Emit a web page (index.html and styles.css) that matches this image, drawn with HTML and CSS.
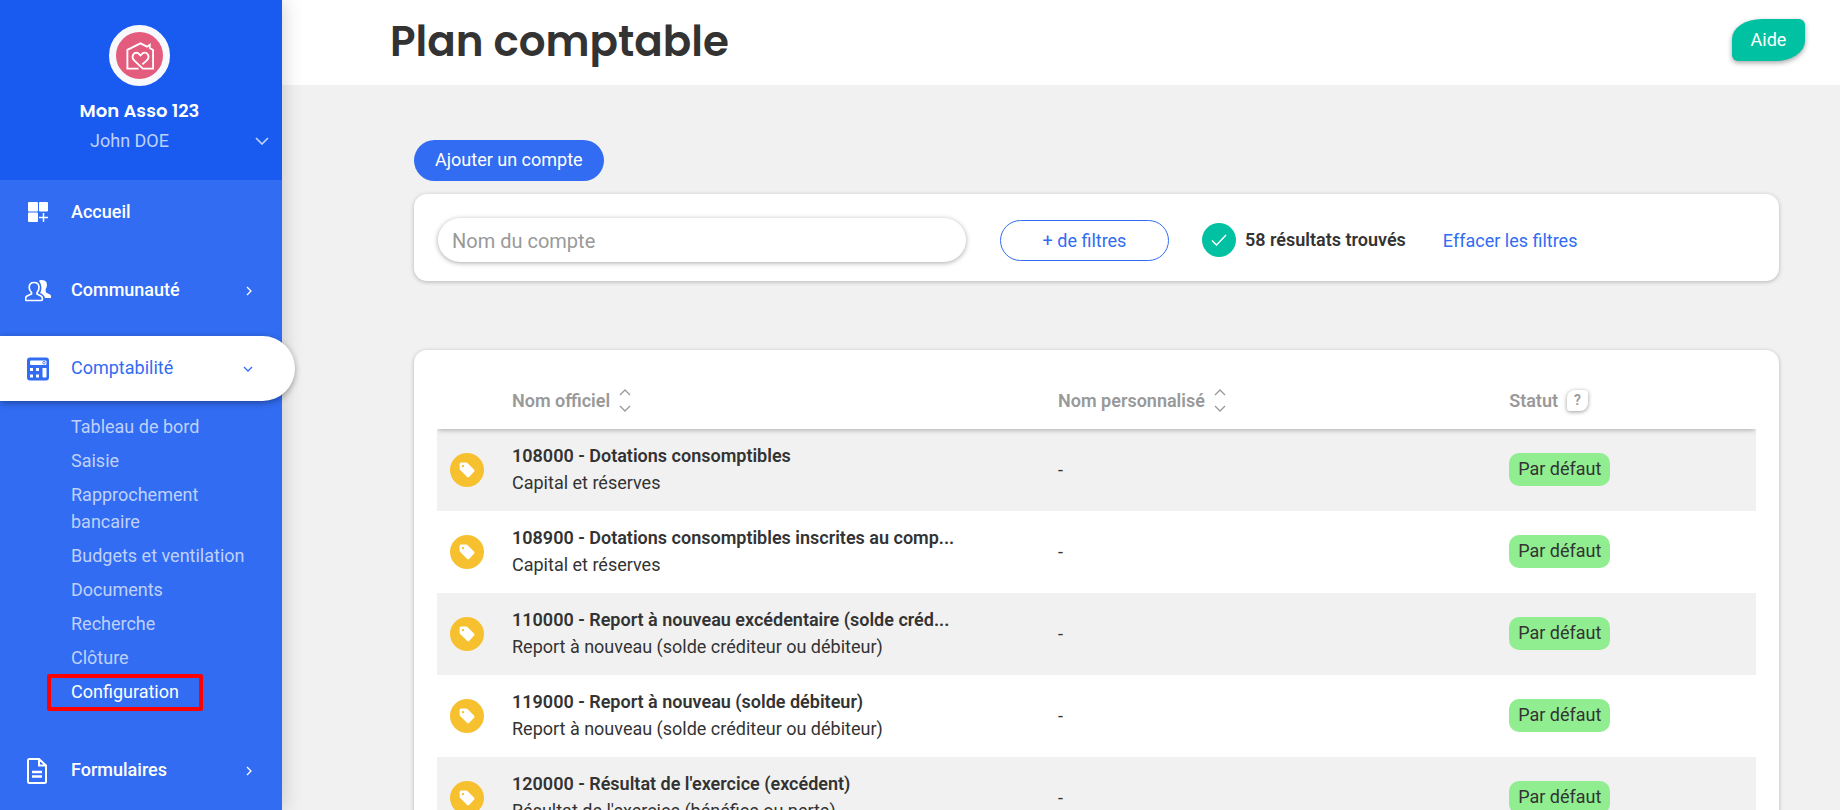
FILE: index.html
```html
<!DOCTYPE html>
<html lang="fr">
<head>
<meta charset="utf-8">
<title>Plan comptable</title>
<meta name="viewport" content="width=device-width, initial-scale=1">
<link rel="stylesheet" href="styles.css">
</head>
<body>
<svg class="sprite" aria-hidden="true">
  <symbol id="tag" viewBox="0 0 16 16">
    <path fill-rule="evenodd" d="M2 .5H7Q8 .5 8.700 1.200L15 7.500Q16 8.600 15 9.700L10.300 14.700Q9.200 15.800 8 14.700L1.400 8.300Q.6 7.500 .6 6.500V2Q.6 .5 2 .5ZM4 2.900A1.200 1.200 0 1 0 4 5.300A1.200 1.200 0 1 0 4 2.900Z"/>
  </symbol>
  <symbol id="sort" viewBox="0 0 12 24">
    <path d="M1 7L6 2L11 7M1 18L6 23L11 18"/>
  </symbol>
  <symbol id="next" viewBox="0 0 6 10"><path d="M1 1L5 5L1 9"/></symbol>
</svg>
<div class="app">
  <aside class="sidebar">
    <div class="account">
      <div class="logo">
        <svg viewBox="0 0 30 30" aria-hidden="true">
          <path d="M13.500 28.500H1.500V8.500L15.500 1.500L22.500 5L25.500 3V6.500L29 8.500V28.500H18L9 20C4.500 15 9 10 13 12L15.500 14.500L18 12C22 10 27 15 22 20L17.500 24"/>
        </svg>
      </div>
      <strong class="asso">Mon Asso 123</strong>
      <button class="user" type="button"><span>John DOE</span>
        <svg viewBox="0 0 14 8" aria-hidden="true"><path d="M1 1L7 7L13 1"/></svg>
      </button>
    </div>
    <nav class="menu">
      <a class="item" href="#">
        <svg class="icon" viewBox="0 0 26 26" aria-hidden="true">
          <g fill="currentColor"><rect x="3" y="2" width="10" height="9.500" rx="1"/><rect x="14" y="2" width="9" height="9.500" rx="1"/><rect x="3" y="12.500" width="10" height="9.500" rx="1"/></g>
          <path d="M18.500 13V22M14 17.500H23" stroke="currentColor" stroke-width="1.500"/>
        </svg>
        <span>Accueil</span>
      </a>
      <a class="item" href="#">
        <svg class="icon" viewBox="0 0 26 26" aria-hidden="true">
          <path d="M9 4.500C12.500 4.500 14 6.500 14 9.500C14 11.500 13.500 13 12 14.500V16L16 18Q17.500 19 17.500 21Q17.500 22.500 16 22.500H2Q.5 22.500 .5 21Q.5 19 2 18L6.500 16V14.500C5 13 4.200 11.500 4.200 9.500C4.200 6.500 5.500 4.500 9 4.500Z" fill="none" stroke="currentColor" stroke-width="1.700"/>
          <path d="M14 3C15 1.700 20 1.500 21.500 4.500C22.500 7.500 21.500 10 20.500 11.500L21 14.500L25 16.500Q26.500 17.500 26 20H20C19.500 17.500 17.500 16 15 15C17 11.500 17 6.500 14 3Z" fill="currentColor"/>
        </svg>
        <span>Communauté</span>
        <svg class="chevron" aria-hidden="true"><use href="#next"/></svg>
      </a>
      <a class="item active" href="#">
        <svg class="icon" viewBox="0 0 26 26" aria-hidden="true">
          <path fill="currentColor" fill-rule="evenodd" d="M5 1.500H21Q24 1.500 24 4.500V21.500Q24 24.500 21 24.500H5Q2 24.500 2 21.500V4.500Q2 1.500 5 1.500ZM6 4.500Q5 4.500 5 5.500V8Q5 9 6 9H20.500Q21.500 9 21.500 8V5.500Q21.500 4.500 20.500 4.500ZM5 12V15H8V12ZM11 12V15H14V12ZM5 18.500V21.500H8V18.500ZM11 18.500V21.500H14V18.500ZM17.500 12V20.500Q17.500 21.500 18.500 21.500H20.500Q21.500 21.500 21.500 20.500V12Z"/>
          <circle cx="19" cy="6.700" r="1.300" fill="none" stroke="currentColor" stroke-width=".8"/>
        </svg>
        <span>Comptabilité</span>
        <svg class="chevron down" viewBox="0 0 10 6" aria-hidden="true"><path d="M1 1L5 5L9 1"/></svg>
      </a>
      <div class="submenu">
        <a href="#">Tableau de bord</a>
        <a href="#">Saisie</a>
        <a href="#">Rapprochement bancaire</a>
        <a href="#">Budgets et ventilation</a>
        <a href="#">Documents</a>
        <a href="#">Recherche</a>
        <a href="#">Clôture</a>
        <a class="current" href="#">Configuration</a>
      </div>
      <a class="item" href="#">
        <svg class="icon" viewBox="0 0 26 26" aria-hidden="true">
          <path d="M4.500 1H14L21 7.500V23.500Q21 25 19.500 25H4.500Q3 25 3 23.500V2.500Q3 1 4.500 1ZM14 1V7.500H21" fill="none" stroke="currentColor" stroke-width="2"/>
          <path d="M7 14H17M7 18.500H17" stroke="currentColor" stroke-width="2.400"/>
        </svg>
        <span>Formulaires</span>
        <svg class="chevron" aria-hidden="true"><use href="#next"/></svg>
      </a>
    </nav>
  </aside>
  <div class="page">
    <header class="topbar">
      <h1>Plan comptable</h1>
      <button class="help" type="button">Aide</button>
    </header>
    <main class="content">
      <button class="add" type="button">Ajouter un compte</button>
      <form class="card filters">
        <input class="search" type="text" placeholder="Nom du compte" aria-label="Nom du compte">
        <button class="more" type="button">+ de filtres</button>
        <div class="result">
          <span class="check"><svg viewBox="0 0 16 12" aria-hidden="true"><path d="M1 6.500L5.500 11L15 1"/></svg></span>
          <strong>58 résultats trouvés</strong>
        </div>
        <a class="clear" href="#">Effacer les filtres</a>
      </form>
      <section class="card list">
        <table>
          <thead>
            <tr>
              <th class="c-icon"></th>
              <th class="c-name"><span class="head">Nom officiel <svg class="sort" aria-hidden="true"><use href="#sort"/></svg></span></th>
              <th class="c-custom"><span class="head">Nom personnalisé <svg class="sort" aria-hidden="true"><use href="#sort"/></svg></span></th>
              <th><span class="head">Statut <button class="hint" type="button">?</button></span></th>
            </tr>
          </thead>
          <tbody>
            <tr><td><span class="tag"><svg aria-hidden="true"><use href="#tag"/></svg></span></td><td><strong>108000 - Dotations consomptibles</strong><br>Capital et réserves</td><td>-</td><td><span class="badge">Par défaut</span></td></tr>
            <tr><td><span class="tag"><svg aria-hidden="true"><use href="#tag"/></svg></span></td><td><strong>108900 - Dotations consomptibles inscrites au comp...</strong><br>Capital et réserves</td><td>-</td><td><span class="badge">Par défaut</span></td></tr>
            <tr><td><span class="tag"><svg aria-hidden="true"><use href="#tag"/></svg></span></td><td><strong>110000 - Report à nouveau excédentaire (solde créd...</strong><br>Report à nouveau (solde créditeur ou débiteur)</td><td>-</td><td><span class="badge">Par défaut</span></td></tr>
            <tr><td><span class="tag"><svg aria-hidden="true"><use href="#tag"/></svg></span></td><td><strong>119000 - Report à nouveau (solde débiteur)</strong><br>Report à nouveau (solde créditeur ou débiteur)</td><td>-</td><td><span class="badge">Par défaut</span></td></tr>
            <tr><td><span class="tag"><svg aria-hidden="true"><use href="#tag"/></svg></span></td><td><strong>120000 - Résultat de l'exercice (excédent)</strong><br>Résultat de l'exercice (bénéfice ou perte)</td><td>-</td><td><span class="badge">Par défaut</span></td></tr>
          </tbody>
        </table>
      </section>
    </main>
  </div>
</div>
</body>
</html>
```
FILE: styles.css
```css
* { box-sizing: border-box; }

body {
  margin: 0;
  font: 400 18px/27px Roboto, "Liberation Sans", sans-serif;
  color: #333;
  background: #f1f1f1;
}

button { font: inherit; border: 0; padding: 0; cursor: pointer; }
a { color: inherit; text-decoration: none; }
strong { font-weight: 600; }
svg { fill: none; stroke: currentColor; flex: none; }
.sprite { position: absolute; width: 0; height: 0; }

.app { display: flex; height: 100vh; overflow: hidden; }

/* Sidebar */
.sidebar {
  position: relative;
  z-index: 1;
  flex: none;
  width: 282px;
  color: #fff;
  background: #316cf2;
  box-shadow: 0 0 20px rgba(0, 0, 0, .2);
}
.account {
  display: flex;
  flex-direction: column;
  align-items: center;
  height: 180px;
  padding: 25px 3px 0 0;
  background: #195bf0;
}
.logo {
  display: flex;
  align-items: center;
  justify-content: center;
  width: 61px;
  height: 61px;
  border: 7px solid #f8f9fd;
  border-radius: 50%;
  background: #e45c7d;
}
.logo svg { width: 28px; height: 28px; stroke-width: 2; }
.asso {
  margin-top: 11px;
  font-family: Poppins, Inter, sans-serif;
}
.user {
  display: flex;
  align-items: center;
  width: 100%;
  margin-top: 3px;
  padding: 0 10px 0 4px;
  color: #bfd1fb;
  background: none;
}
.user span { flex: 1; }
.user svg { width: 14px; height: 8px; stroke-width: 1.700; }

.item {
  display: flex;
  align-items: center;
  height: 65px;
  margin-bottom: 13px;
  padding: 0 30px 0 25px;
  font-weight: 500;
}
.item span { flex: 1; margin-left: 20px; padding-bottom: 2px; }
.icon { width: 26px; height: 26px; stroke: none; }
.chevron { width: 6px; height: 10px; stroke-width: 1.300; }
.chevron.down { width: 10px; height: 6px; }
.item.active {
  width: calc(100% + 13px);
  margin-bottom: 0;
  padding-right: 42px;
  border-radius: 0 33px 33px 0;
  color: #316cf2;
  background: #fff;
  font-weight: 400;
  box-shadow: 0 2px 6px rgba(0, 0, 0, .35);
}
.submenu {
  display: flex;
  flex-direction: column;
  align-items: flex-start;
  gap: 7px;
  padding: 12px 36px 33px 71px;
  color: #bfd1fb;
}
.submenu a { position: relative; }
.submenu .current { color: #fff; }
.submenu .current::after {
  content: "";
  position: absolute;
  inset: -4px -24px -6px -24px;
  border: 4px solid #f00;
  border-radius: 2px;
}

/* Page */
.page { flex: 1; min-width: 0; }
.topbar {
  display: flex;
  align-items: flex-start;
  justify-content: space-between;
  height: 85px;
  padding: 19px 35px 0 108px;
  background: #fff;
}
h1 {
  margin: 0;
  font: 600 42px/46px Poppins, Inter, sans-serif;
}
.help {
  width: 73px;
  height: 42px;
  padding-bottom: 2px;
  border-radius: 30px 6px 30px 6px / 20px 6px 20px 6px;
  color: #fff;
  background: #00c2a2;
  box-shadow: 0 2px 5px rgba(0, 0, 0, .35);
}
.content { padding: 55px 61px 0 132px; }
.add {
  display: block;
  height: 41px;
  padding: 0 21px 2px;
  border-radius: 21px;
  color: #fff;
  background: #316cf2;
}
.card {
  border-radius: 13px;
  background: #fff;
  box-shadow: 0 1px 4px rgba(0, 0, 0, .25);
}
.filters {
  display: flex;
  align-items: center;
  height: 87px;
  margin-top: 13px;
  padding: 5px 24px 0;
}
.search {
  width: 528px;
  height: 44px;
  padding: 2px 14px 0;
  border: 0;
  border-radius: 22px;
  font: inherit;
  font-size: 20px;
  background: #fff;
  box-shadow: 0 1px 5px rgba(0, 0, 0, .35);
}
.search::placeholder { color: #999; opacity: 1; }
.more {
  width: 169px;
  height: 41px;
  margin-left: 34px;
  border: 1px solid #316cf2;
  border-radius: 21px;
  color: #316cf2;
  background: #fff;
}
.result { display: flex; align-items: center; gap: 9px; margin-left: 33px; }
.result strong { padding-bottom: 2px; }
.check, .tag {
  display: flex;
  align-items: center;
  justify-content: center;
  width: 34px;
  height: 34px;
  border-radius: 50%;
  color: #fff;
}
.check { background: #00c2a2; }
.check svg { width: 16px; height: 12px; stroke-width: 1.500; }
.clear { margin-left: 37px; color: #316cf2; }

/* Accounts table */
.list { margin-top: 69px; padding: 23px; }
table { width: 100%; border-collapse: collapse; table-layout: fixed; }
thead { box-shadow: 0 2px 5px -1px rgba(0, 0, 0, .3); clip-path: inset(0 0 -8px); }
th { height: 56px; padding: 0 0 2px; text-align: left; font-weight: 600; color: #999; }
.c-icon { width: 75px; }
.c-name { width: 41.4%; }
.c-custom { width: 34.2%; }
.head { display: flex; align-items: center; gap: 9px; }
.sort { width: 12px; height: 24px; stroke-width: 1.300; }
.hint {
  width: 21px;
  height: 21px;
  border-radius: 8px 3px 8px 3px;
  color: #999;
  background: #fff;
  font-size: 14px;
  line-height: 21px;
  box-shadow: 0 1px 4px rgba(0, 0, 0, .4);
}
td { height: 82px; padding: 0 0 2px; }
tbody tr:nth-child(odd) { background: #f1f1f1; }
.tag { margin: 2px 0 0 13px; background: #f6c02f; }
.tag svg { width: 16px; height: 16px; fill: currentColor; stroke: none; }
.badge {
  display: inline-block;
  height: 33px;
  padding: 2px 9px;
  border-radius: 10px;
  background: #90ee90;
}
```
